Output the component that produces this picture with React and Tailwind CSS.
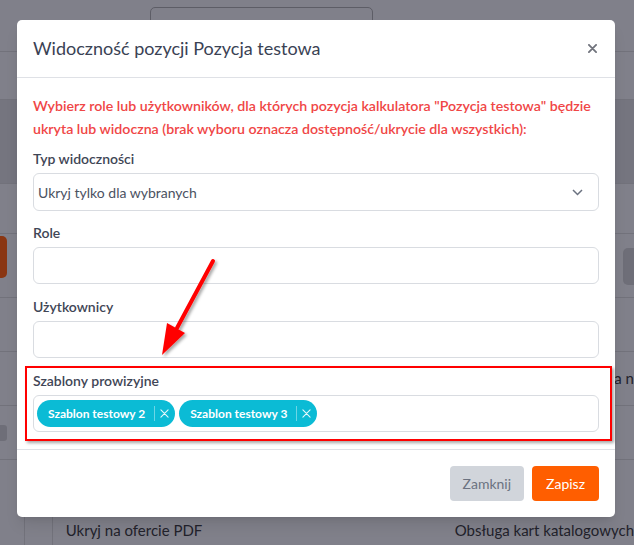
import React from "react";

function XIcon({ size = 9, stroke = "#6b7280", width = 2 }) {
  return (
    <svg width={size} height={size} viewBox="0 0 10 10">
      <path d="M1 1L9 9M9 1L1 9" stroke={stroke} strokeWidth={width} strokeLinecap="round" />
    </svg>
  );
}

function Tag({ label }) {
  return (
    <span className="inline-flex items-center h-[27px] rounded-full bg-[#0bbbd5] text-white font-bold text-[12px] pl-[11px] pr-[6px]">
      <span>{label}</span>
      <span className="ml-[9px] h-[15px] w-px bg-white/40" />
      <span className="ml-[5px] flex items-center">
        <XIcon size={9} stroke="rgba(255,255,255,0.9)" width={1.2} />
      </span>
    </span>
  );
}

function Field({ label, children, className = "" }) {
  return (
    <div className={"flex flex-col " + className}>
      <label className="text-[14px] leading-[20px] font-semibold text-[#3f4656] mb-[4px]">{label}</label>
      {children}
    </div>
  );
}

export default function App() {
  return (
    <div
      className="relative w-[634px] h-[545px] overflow-hidden bg-[#80808a]"
      style={{ fontFamily: "Lato, 'Noto Sans', sans-serif" }}
    >
      {/* background page (dimmed) */}
      <div className="flex flex-col w-full h-full">
        <div className="h-[52px] border-b border-[#72727b] flex items-start">
          <div className="ml-[150px] mt-[7px] w-[223px] h-[44px] rounded-[5px] border border-[#5d5d66] px-[16px] pt-[10px] text-[15px] text-[#2a2a33]">
            Ukryj tylko dla wybranych
          </div>
        </div>
        <div className="h-[48px] border-b border-[#72727b]" />
        <div className="h-[84px] bg-[#75757f] border-b border-[#72727b]" />
        <div className="h-[50px] border-b border-[#72727b]" />
        <div className="h-[64px] border-b border-[#72727b] flex items-start justify-between">
          <div className="mt-[2px] w-[7px] h-[42px] rounded-r-[5px] bg-[#8a3612]" />
          <div className="mt-[14px] w-[11px] h-[37px] rounded-l-[5px] bg-[#6e6e78]" />
        </div>
        <div className="h-[54px] border-b border-[#72727b]" />
        <div className="h-[54px] border-b border-[#72727b] flex items-center justify-end">
          <span className="text-[15px] text-[#22222b]">a n</span>
        </div>
        <div className="h-[54px] border-b border-[#72727b] flex items-center">
          <div className="w-[7px] h-[16px] rounded-r-[3px] bg-[#6e6e78]" />
        </div>
        <div className="flex-1 flex items-end">
          <div className="w-[27px] h-[45px] border-r border-[#72727b]" />
          <div className="w-[31px] h-[45px] border-r border-[#72727b]" />
          <div className="flex-1 h-[30px] flex items-center pl-[13px] text-[15px] text-[#22222b]">
            <span className="w-[389px]">Ukryj na ofercie PDF</span>
            <span className="whitespace-nowrap">Obsługa kart katalogowych</span>
          </div>
        </div>
      </div>

      {/* modal */}
      <div className="absolute left-[17px] top-[20px] w-[598px] bg-white rounded-[5px] shadow-lg flex flex-col">
        <div className="h-[58px] border-b border-[#dfe1e6] flex items-center justify-between px-[16px]">
          <h2 className="text-[18px] text-[#3a4254] font-normal">Widoczność pozycji Pozycja testowa</h2>
          <button className="mr-[2px] flex items-center"><XIcon size={9} stroke="#70737c" width={2} /></button>
        </div>
        <div className="px-[16px] pt-[16px] pb-[17px] flex flex-col">
          <p className="text-[14.2px] leading-[23px] font-semibold text-[#f04646] mb-[9px]">
            Wybierz role lub użytkowników, dla których pozycja kalkulatora "Pozycja testowa" będzie ukryta lub widoczna (brak wyboru oznacza dostępność/ukrycie dla wszystkich):
          </p>
          <Field label="Typ widoczności" className="mb-[12px]">
            <div className="h-[38px] rounded-[6px] border border-[#d9dce1] flex items-center justify-between pl-[4px] pr-[15px]">
              <span className="text-[14px] text-[#4b5262]">Ukryj tylko dla wybranych</span>
              <svg width="11" height="7" viewBox="0 0 11 7">
                <path d="M1 1L5.5 5.5L10 1" fill="none" stroke="#6b7280" strokeWidth="1.5" />
              </svg>
            </div>
          </Field>
          <Field label="Role" className="mb-[13px]">
            <div className="h-[37px] rounded-[6px] border border-[#d9dce1]" />
          </Field>
          <Field label="Użytkownicy" className="mb-[13px]">
            <div className="h-[37px] rounded-[6px] border border-[#d9dce1]" />
          </Field>
          <Field label="Szablony prowizyjne">
            <div className="h-[37px] rounded-[6px] border border-[#d9dce1] flex items-center gap-[4px] pl-[3px]">
              <Tag label="Szablon testowy 2" />
              <Tag label="Szablon testowy 3" />
            </div>
          </Field>
        </div>
        <div className="border-t border-[#dfe1e6] h-[68px] flex items-center justify-end gap-[8px] px-[16px]">
          <button className="h-[35px] px-[13px] rounded-[4px] bg-[#d1d5db] text-[14px] text-[#6b7280]">Zamknij</button>
          <button className="h-[35px] px-[14px] rounded-[4px] bg-[#ff5e00] text-[14px] text-white">Zapisz</button>
        </div>
      </div>

      {/* annotation: red box */}
      <div className="absolute left-[25px] top-[366px] w-[587px] h-[75px] border-2 border-[#ff0000] shadow-[2px_2px_3px_rgba(0,0,0,0.35)]" />

      {/* annotation: arrow */}
      <svg className="absolute left-0 top-0" width="634" height="545" viewBox="0 0 634 545">
        <defs>
          <filter id="sh" x="-20%" y="-20%" width="140%" height="140%">
            <feDropShadow dx="2" dy="2" stdDeviation="1.5" floodColor="#000" floodOpacity="0.35" />
          </filter>
        </defs>
        <g filter="url(#sh)">
          <line x1="213" y1="261" x2="177" y2="328" stroke="#ff0000" strokeWidth="4" strokeLinecap="round" />
          <polygon points="162,355 185,333 167,323" fill="#ff0000" />
        </g>
      </svg>
    </div>
  );
}
